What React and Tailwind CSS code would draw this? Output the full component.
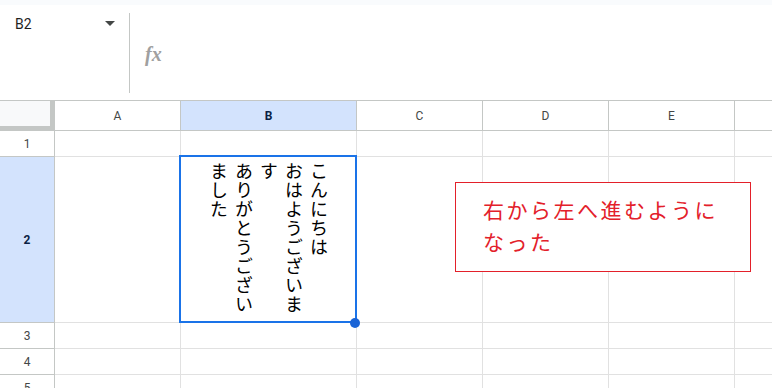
import React from 'react';

const cols = [
    { id: 'A', w: 'w-[126px]' },
    { id: 'B', w: 'w-[176px]' },
    { id: 'C', w: 'w-[126px]' },
    { id: 'D', w: 'w-[126px]' },
    { id: 'E', w: 'w-[126px]' },
];

const rows = [
    { id: 1, h: 'h-[26px]' },
    { id: 2, h: 'h-[166px]' },
    { id: 3, h: 'h-[26px]' },
    { id: 4, h: 'h-[26px]' },
    { id: 5, h: 'h-[26px]' },
];

const FormulaBar = () => (
    <div className="flex flex-col h-[101px] border-b border-[#c4c7c5]">
        <div className="h-[5px] bg-[#f9fbfd]" />
        <div className="flex flex-1 items-center bg-white">
            <div className="flex w-[129px] self-stretch items-start justify-between pl-[15px] pr-[14px] pt-[9px]">
                <span className="text-[14px] leading-[20px] text-[#1f1f1f]">B2</span>
                <svg width="10" height="6" viewBox="0 0 10 6" className="mt-[7px]">
                    <polygon points="0,0 10,0 5,5" fill="#444746" />
                </svg>
            </div>
            <div className="w-px h-[80px] bg-[#c4c7c5]" />
            <span className="ml-[15px] mt-[2px] text-[20px] italic font-semibold text-[#a0a0a0] font-['Liberation_Serif',serif]">fx</span>
        </div>
    </div>
);

const App = () => {
    return (
        <div className="relative w-[772px] h-[388px] overflow-hidden bg-white font-['Roboto','Liberation_Sans',sans-serif]">
            <FormulaBar />

            {/* Column header */}
            <div className="flex h-[30px]">
                <div className="w-[55px] shrink-0 bg-[#f8f9fa] border-r-[5px] border-b-[5px] border-[#c4c7c5]" />
                {cols.map((c) => (
                    <div
                        key={c.id}
                        className={`${c.w} shrink-0 flex items-center justify-center border-r border-b border-[#c4c7c5] text-[12px] ${
                            c.id === 'B' ? 'bg-[#d3e3fd] font-bold text-[#0b1f44]' : 'text-[#444746]'
                        }`}
                    >
                        {c.id}
                    </div>
                ))}
                <div className="flex-1 border-b border-[#c4c7c5]" />
            </div>

            {/* Rows */}
            {rows.map((r) => (
                <div key={r.id} className={`flex ${r.h}`}>
                    <div
                        className={`w-[55px] shrink-0 flex items-center justify-center border-r border-b border-[#c4c7c5] text-[12px] ${
                            r.id === 2 ? 'bg-[#d3e3fd] font-bold text-[#0b1f44]' : 'text-[#444746]'
                        }`}
                    >
                        {r.id}
                    </div>
                    {cols.map((c) => (
                        <div key={c.id} className={`${c.w} shrink-0 border-r border-b border-[#e1e1e1]`}>
                            {r.id === 2 && c.id === 'B' && (
                                <div className="flex justify-center pt-[5px]">
                                    <div className="h-[160px] [writing-mode:vertical-rl] text-[18px] leading-[25px] tracking-[1px] text-black font-['Noto_Sans_CJK_JP',sans-serif]">
                                        こんにちは<br />おはようございます<br />ありがとうございました
                                    </div>
                                </div>
                            )}
                        </div>
                    ))}
                    <div className="flex-1 border-b border-[#e1e1e1]" />
                </div>
            ))}

            {/* Selection */}
            <div className="absolute left-[179px] top-[155px] w-[178px] h-[168px] border-2 border-[#1a73e8]" />
            <div className="absolute left-[350px] top-[318px] w-[10px] h-[10px] rounded-full bg-[#1a64d6]" />

            {/* Annotation */}
            <div className="absolute left-[455px] top-[182px] w-[296px] h-[90px] bg-white border border-[#e3202a] pl-[27px] pt-[10px]">
                <p className="text-[21px] leading-[32px] tracking-[2.5px] text-[#e3202a] font-['Noto_Sans_CJK_JP',sans-serif]">
                    右から左へ進むように<br />なった
                </p>
            </div>
        </div>
    );
};

export default App;
